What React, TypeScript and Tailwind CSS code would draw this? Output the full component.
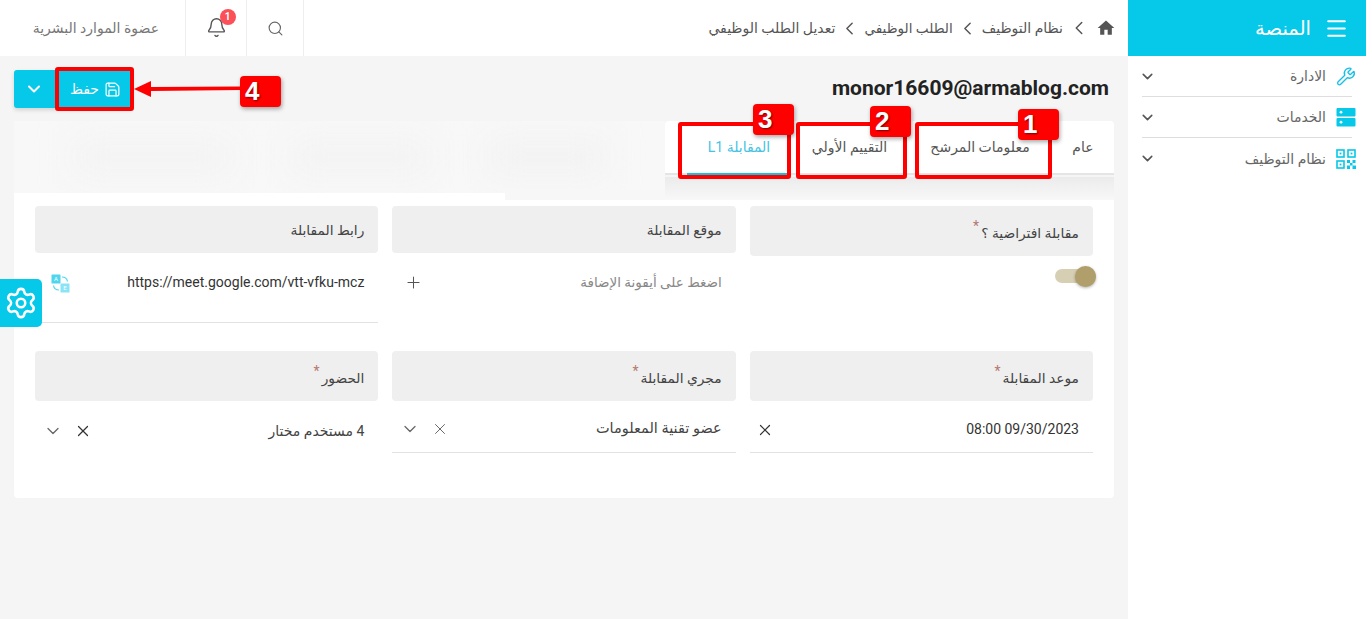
import React from "react";
import { Menu, Wrench, ChevronDown, ChevronLeft, Search, Bell, Save, Settings, X, Plus } from "lucide-react";

const font = { fontFamily: 'Roboto, "Noto Sans", "DejaVu Sans", sans-serif' };

function Label({ text, star, h }: { text: string; star?: boolean; h: string }) {
  return (
    <div className={`${h} bg-[#efefef] rounded-[4px] flex items-center pr-[14px] text-[13.8px] text-[#444] ${star ? "pt-[5px]" : "pt-[2px]"}`}>
      <span>{text}</span>
      {star ? <span className="text-[#b5796f] text-[14px] leading-none mr-[2px] relative top-[-8px]">*</span> : null}
    </div>
  );
}

function Crumb({ t, c }: { t: string; c: string }) {
  return <span className={`${c} text-[#555]`}>{t}</span>;
}

function SideItem({ icon, t, last }: { icon: React.ReactNode; t: string; last?: boolean }) {
  return (
    <div className={`h-[41px] flex items-center justify-between mx-[14px] ${last ? "" : "border-b border-[#dedede]"}`}>
      <div className="flex items-center gap-[10px] mr-[-4px] pt-[1px]">
        <span className="w-[20px] flex justify-center">{icon}</span>
        <span className="text-[14px] text-[#666]">{t}</span>
      </div>
      <ChevronDown size={17} strokeWidth={2.2} className="text-[#555] ml-[-3px]" />
    </div>
  );
}

function Tab({ t, w, active }: { t: string; w: string; active?: boolean }) {
  return (
    <div className={`${w} flex items-center justify-center text-[14px] ${active ? "text-[#45c3e3] border-b-2 border-[#0bc4e2] mb-[-2px]" : "text-[#555]"}`}>
      {t}
    </div>
  );
}

function Mark({ n, box, badge }: { n: string; box: string; badge: string }) {
  return (
    <>
      <div className={`absolute border-4 border-[#f00] rounded-[3px] ${box}`} />
      <div className={`absolute w-[41px] h-[31px] bg-[#f00] rounded-[4px] shadow-[1px_2px_4px_rgba(0,0,0,0.35)] flex items-center pl-[5px] text-white font-bold text-[26px] ${badge}`} dir="ltr" style={{ fontFamily: '"Liberation Sans", sans-serif', textShadow: "1px 1px 2px rgba(90,0,0,.8)" }}>
        <span>{n}</span>
      </div>
    </>
  );
}

export default function App() {
  return (
    <div dir="rtl" style={font} className="relative h-[619px] w-[1366px] overflow-hidden flex bg-[#f5f5f5]">
      {/* Sidebar */}
      <aside className="w-[238px] shrink-0 bg-white h-full">
        <div className="h-[56px] bg-[#06c8e8] flex items-center pr-[17px] pl-4 gap-[13px] text-white">
          <Menu size={25} strokeWidth={1.9} />
          <span className="text-[19.5px] pt-[1px]">المنصة</span>
        </div>
        <div>
          <SideItem t="الادارة" icon={<Wrench size={21} strokeWidth={1.6} className="text-[#17c0e5]" />} />
          <SideItem
            t="الخدمات"
            icon={
              <svg width="20" height="19" viewBox="0 0 20 19">
                <rect x="0.5" y="0" width="19" height="8.5" rx="1" fill="#06c8e8" />
                <rect x="0.5" y="10" width="19" height="8.5" rx="1" fill="#06c8e8" />
                <circle cx="5" cy="4.2" r="1.4" fill="#fff" />
                <circle cx="5" cy="14.2" r="1.4" fill="#fff" />
              </svg>
            }
          />
          <SideItem
            t="نظام التوظيف"
            last
            icon={
              <svg width="20" height="20" viewBox="0 0 20 20" fill="none" stroke="#06c8e8" strokeWidth="1.6">
                <rect x="1" y="1" width="7" height="7" />
                <rect x="12" y="1" width="7" height="7" />
                <rect x="1" y="12" width="7" height="7" />
                <rect x="3.6" y="3.6" width="1.8" height="1.8" fill="#06c8e8" stroke="none" />
                <rect x="14.6" y="3.6" width="1.8" height="1.8" fill="#06c8e8" stroke="none" />
                <rect x="3.6" y="14.6" width="1.8" height="1.8" fill="#06c8e8" stroke="none" />
                <path d="M11 11h3v3h-3zM16.5 11h3v3h-3zM14 14h2.5v2.5H14zM11 16.5h3V20h-3zM16.5 16.5H20V20h-3.5z" fill="#06c8e8" stroke="none" />
              </svg>
            }
          />
        </div>
      </aside>

      <div className="flex-1 min-w-0 flex flex-col">
        {/* Top bar */}
        <header className="h-[56px] shrink-0 bg-white flex items-stretch">
          <div className="flex-1 flex items-center pr-[14px] gap-[4px]">
            <svg width="16" height="16" viewBox="0 0 24 24" fill="#555" className="scale-125 ml-[3px]">
              <path d="M10 20v-6h4v6h5v-8h3L12 3 2 12h3v8z" />
            </svg>
            <ChevronLeft size={22} strokeWidth={1.6} className="text-[#555] mx-[1px]" />
            <Crumb t="نظام التوظيف" c="text-[14px]" />
            <ChevronLeft size={21} strokeWidth={1.7} className="text-[#555]" />
            <Crumb t="الطلب الوظيفي" c="text-[13.6px]" />
            <ChevronLeft size={21} strokeWidth={1.7} className="text-[#555]" />
            <Crumb t="تعديل الطلب الوظيفي" c="text-[14px]" />
          </div>
          <div className="w-[58px] flex items-center justify-center border-r border-l border-[#eeeeee]">
            <Search size={17} strokeWidth={1.6} className="text-[#666]" />
          </div>
          <div className="w-[61px] flex items-center justify-center border-l border-[#eeeeee]">
            <div className="relative top-[-1px]">
              <Bell size={21} strokeWidth={1.6} className="text-[#555]" />
              <span className="absolute top-[-8px] right-[-9px] w-[16px] h-[16px] rounded-full bg-[#fb5058] text-white text-[10px] font-bold flex items-center justify-center">1</span>
            </div>
          </div>
          <div className="w-[185px] flex items-center pr-[26px] pt-[1px] text-[14px] text-[#777]">عضوة الموارد البشرية</div>
        </header>

        <main className="flex-1 px-[14px] min-h-0">
          {/* Title row */}
          <div className="h-[65px] flex items-center justify-between pt-[1px]">
            <h1 className="text-[21px] font-bold text-[#222] pr-[5px]" dir="ltr">monor16609@armablog.com</h1>
            <div className="flex h-[38px] bg-[#06c8e8] rounded-[3px] text-white shadow-[0_2px_4px_rgba(0,0,0,0.15)]">
              <div className="w-[78px] flex items-center justify-center gap-[5px] pl-[5px] text-[14px]">
                <Save size={17} strokeWidth={1.7} />
                <span>حفظ</span>
              </div>
              <div className="w-[40px] flex items-center justify-center">
                <ChevronDown size={20} strokeWidth={2.4} />
              </div>
            </div>
          </div>

          {/* Tabs */}
          <div className="h-[72px] flex items-stretch">
            <div className="w-[449px] h-[54px] bg-white rounded-t-[4px] flex items-stretch border-b-2 border-[#e5e5e5]">
              <Tab t="عام" w="w-[62px]" />
              <Tab t="معلومات المرشح" w="w-[144px]" />
              <Tab t="التقييم الأولي" w="w-[117px]" />
              <Tab t="المقابلة L1" w="w-[104px]" active />
            </div>
            <div className="flex-1 h-full bg-[#f8f8f8] overflow-hidden flex items-center justify-around px-[30px]">
              <div className="w-[120px] h-[36px] bg-[#f2f2f2] blur-lg" />
              <div className="w-[140px] h-[36px] bg-[#f3f3f3] blur-lg" />
              <div className="w-[160px] h-[36px] bg-[#f3f3f3] blur-lg" />
            </div>
          </div>

          {/* Card */}
          <section className="h-[305px] bg-white rounded-b-[4px] px-[21px] pt-[13px] grid grid-cols-3 gap-x-[14px] content-start">
            <div className="h-[145px]">
              <Label text="مقابلة افتراضية ؟" star h="h-[50px]" />
              <div className="pt-[10px] flex">
                <div className="relative w-[41px] h-[14px] rounded-full bg-[#d7cfb4] mr-[-3px] mt-[3px]">
                  <div className="absolute right-0 top-[-3px] w-[21px] h-[21px] rounded-full bg-[#b09f6b] shadow-[0_1px_3px_rgba(0,0,0,0.3)]" />
                </div>
              </div>
            </div>
            <div className="h-[145px]">
              <Label text="موقع المقابلة" h="h-[47px]" />
              <div className="h-[58px] flex items-center justify-between pr-[14px] pl-[12px] text-[13.5px] text-[#888]">
                <span>اضغط على أيقونة الإضافة</span>
                <Plus size={19} strokeWidth={1.3} className="text-[#555]" />
              </div>
            </div>
            <div className="h-[145px]">
              <Label text="رابط المقابلة" h="h-[47px]" />
              <div className="h-[70px] border-b border-[#e2e2e2] pr-[14px] pl-[16px] pb-[10px] flex items-center justify-between">
                <span dir="ltr" className="text-[14px] text-[#333]">https://meet.google.com/vtt-vfku-mcz</span>
                <svg width="19" height="19" viewBox="0 0 19 19" className="mb-[-1px]">
                  <rect x="0.5" y="0.5" width="9" height="9" rx="0.5" fill="#4fd6ee" />
                  <rect x="9.5" y="9.5" width="9" height="9" rx="0.5" fill="#8be4f5" />
                  <path d="M11 3c3 0 5 1.5 5.5 4.5M8 16c-3 0-5-1.5-5.5-4.5" fill="none" stroke="#4fd6ee" strokeWidth="1.2" />
                  <text x="5" y="7" fontSize="6" fill="#fff" textAnchor="middle">A</text>
                  <text x="14" y="16" fontSize="6" fill="#fff" textAnchor="middle">E</text>
                </svg>
              </div>
            </div>

            <div>
              <Label text="موعد المقابلة" star h="h-[50px]" />
              <div className="h-[52px] border-b border-[#e2e2e2] pr-[14px] pl-[6px] pt-[6px] flex items-center justify-between">
                <span dir="ltr" className="text-[14px] text-[#333]">08:00 09/30/2023</span>
                <X size={18} strokeWidth={1.6} className="text-[#333]" />
              </div>
            </div>
            <div>
              <Label text="مجري المقابلة" star h="h-[50px]" />
              <div className="h-[52px] border-b border-[#e2e2e2] pr-[14px] pl-[8px] pt-[5px] flex items-center justify-between">
                <span className="text-[14.5px] text-[#444]">عضو تقنية المعلومات</span>
                <div className="flex items-center gap-[11px] text-[#666]">
                  <X size={18} strokeWidth={1.3} />
                  <ChevronDown size={20} strokeWidth={1.5} />
                </div>
              </div>
            </div>
            <div>
              <Label text="الحضور" star h="h-[50px]" />
              <div className="h-[52px] pr-[14px] pl-[8px] pt-[8px] flex items-center justify-between">
                <span className="text-[14px] text-[#444]">4 مستخدم مختار</span>
                <div className="flex items-center gap-[11px]">
                  <X size={18} strokeWidth={1.6} className="text-[#333]" />
                  <ChevronDown size={20} strokeWidth={1.5} className="text-[#666]" />
                </div>
              </div>
            </div>
          </section>
        </main>
      </div>

      {/* Shadow band under the tab strip */}
      <div className="absolute left-[505px] top-[190px] w-[160px] h-[10px] bg-[#f7f7f7]" />
      <div className="absolute left-[665px] top-[177px] w-[449px] h-[23px] bg-gradient-to-b from-[#ebebeb] to-[#f8f8f8]" />

      {/* Floating settings button */}
      <div className="absolute left-0 top-[279px] w-[42px] h-[48px] bg-[#06c8e8] rounded-r-[5px] flex items-center justify-center text-white">
        <Settings size={34} strokeWidth={1.8} />
      </div>

      {/* Annotations */}
      <Mark n="1" box="left-[915px] top-[122px] w-[137px] h-[57px]" badge="left-[1018px] top-[109px]" />
      <Mark n="2" box="left-[796px] top-[122px] w-[111px] h-[57px]" badge="left-[870px] top-[106px]" />
      <Mark n="3" box="left-[678px] top-[122px] w-[113px] h-[57px]" badge="left-[753px] top-[104px]" />
      <Mark n="4" box="left-[55px] top-[67px] w-[79px] h-[44px]" badge="left-[240px] top-[76px]" />
      <svg className="absolute left-[130px] top-[78px]" width="112" height="22" viewBox="0 0 112 22">
        <path d="M4 11 L21 3 V9 L111 8.5 V12 L21 13 V19 Z" fill="#f00" />
      </svg>
    </div>
  );
}
